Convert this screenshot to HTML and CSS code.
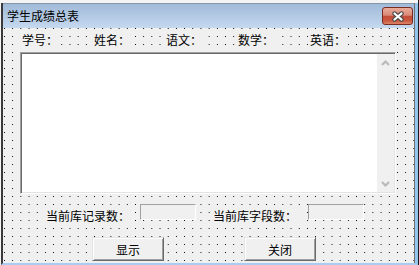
FILE: index.html
```html
<!DOCTYPE html>
<html lang="zh-CN">
<head>
    <meta charset="UTF-8">
    <title>学生成绩总表</title>
    <link rel="stylesheet" href="styles.css">
</head>
<body>
    <div class="window">
        <div class="frame">
            <div class="inner">
                <div class="titlebar">
                    <span class="title">学生成绩总表</span>
                    <span class="close">
                        <svg width="14" height="11" viewBox="0 0 14 11">
                            <path d="M3.5 2.5 L10.5 8.5 M10.5 2.5 L3.5 8.5" stroke="#4b4b4b" stroke-width="4.4" stroke-linecap="round"/>
                            <path d="M3.5 2.5 L10.5 8.5 M10.5 2.5 L3.5 8.5" stroke="#fff" stroke-width="2.2" stroke-linecap="round"/>
                        </svg>
                    </span>
                </div>
                <div class="client">
                    <div class="heads">
                        <span class="lbl">学号：</span>
                        <span class="lbl">姓名：</span>
                        <span class="lbl">语文：</span>
                        <span class="lbl">数学：</span>
                        <span class="lbl">英语：</span>
                    </div>
                    <div class="listbox">
                        <div class="vscroll">
                            <svg width="9" height="6" viewBox="0 0 9 6"><polyline points="1,5 4.5,1.5 8,5" fill="none" stroke="#b8b8b8" stroke-width="2"/></svg>
                            <svg width="9" height="6" viewBox="0 0 9 6"><polyline points="1,1 4.5,4.5 8,1" fill="none" stroke="#b8b8b8" stroke-width="2"/></svg>
                        </div>
                    </div>
                    <div class="info">
                        <span class="lbl count-lbl">当前库记录数：</span>
                        <span class="textbox records"></span>
                        <span class="lbl count-lbl fields-lbl">当前库字段数：</span>
                        <span class="textbox fields"></span>
                    </div>
                    <div class="buttons">
                        <button class="btn">显示</button>
                        <button class="btn">关闭</button>
                    </div>
                </div>
            </div>
        </div>
    </div>
</body>
</html>
```

FILE: styles.css
```css
* {
    box-sizing: border-box;
}
body {
    margin: 0;
    font-family: "Noto Sans CJK SC", "Liberation Sans", sans-serif;
    font-size: 12px;
    color: #000;
}
.window {
    width: 419px;
    height: 265px;
    padding: 3px 0 0 1px;
    background-color: #f4f4f4;
    border-right: 1px solid #1a1a1a;
}
.frame {
    height: 262px;
    border-left: 2px solid #3a3a3a;
    border-right: 3px solid #92c4ec;
    border-bottom: 2px solid #a8cdf0;
}
.inner {
    height: 100%;
    display: flex;
    flex-direction: column;
    border-right: 1px solid #6f6f6f;
}
.titlebar {
    height: 25px;
    flex-shrink: 0;
    display: flex;
    align-items: flex-start;
    padding-left: 4px;
    background-image: linear-gradient(#a0bad9, #c5d9ef);
    border-top: 1px solid #8597ad;
}
.title {
    line-height: 14px;
    margin-top: 5px;
}
.close {
    margin-left: auto;
    margin-right: 1px;
    margin-top: 3px;
    width: 31px;
    height: 18px;
    display: flex;
    justify-content: center;
    align-items: center;
    border: 1px solid #7a2b22;
    border-radius: 3px;
    background-image: linear-gradient(#e9ab9b 0%, #da8a78 45%, #c44c38 52%, #c9563f 78%, #dc8466 100%);
}

/* design-time dot grid */
.client {
    flex: 1;
    background-color: #000;
    background-image:
        linear-gradient(to right, transparent 1px, #f0f0f0 1px),
        linear-gradient(to bottom, transparent 1px, #f0f0f0 1px);
    background-size: 8.2px 8px;
    background-position: 1px 0;
}
.lbl {
    background-color: #f0f0f0;
    line-height: 16px;
    white-space: nowrap;
}
.heads {
    display: flex;
    height: 16px;
    margin-top: 4px;
    padding-left: 17px;
}
.heads .lbl {
    width: 40px;
    padding-left: 2px;
    margin-right: 32px;
}
.listbox {
    width: 376px;
    height: 142px;
    margin: 4px 0 0 17px;
    padding: 1px;
    display: flex;
    justify-content: flex-end;
    background-color: #fff;
    border: 1px solid;
    border-color: #a0a0a0 #fff #fff #a0a0a0;
    box-shadow: inset 1px 1px #696969, inset -1px -1px #e3e3e3;
}
.vscroll {
    width: 17px;
    display: flex;
    flex-direction: column;
    justify-content: space-between;
    align-items: center;
    padding: 6px 0 5px;
    background-color: #f0f0f0;
}
.info {
    display: flex;
    align-items: flex-start;
    margin-top: 10px;
}
.count-lbl {
    margin-top: 4px;
    padding: 0 3px;
    margin-left: 40px;
}
.fields-lbl {
    margin-left: 14px;
}
.textbox {
    width: 56px;
    height: 16px;
    background-color: #f0f0f0;
    border: 1px solid;
    border-color: #a0a0a0 #fff #fff #a0a0a0;
}
.records {
    margin-left: 7px;
}
.fields {
    margin-left: 8px;
}
.buttons {
    display: flex;
    gap: 80px;
    margin-top: 13px;
    padding-left: 89px;
}
.btn {
    width: 72px;
    height: 24px;
    padding: 0;
    font: inherit;
    color: #000;
    background-color: #f0f0f0;
    border: 1px solid;
    border-color: #e3e3e3 #696969 #696969 #e3e3e3;
    box-shadow: inset 1px 1px #fff, inset -1px -1px #a0a0a0;
}
```
